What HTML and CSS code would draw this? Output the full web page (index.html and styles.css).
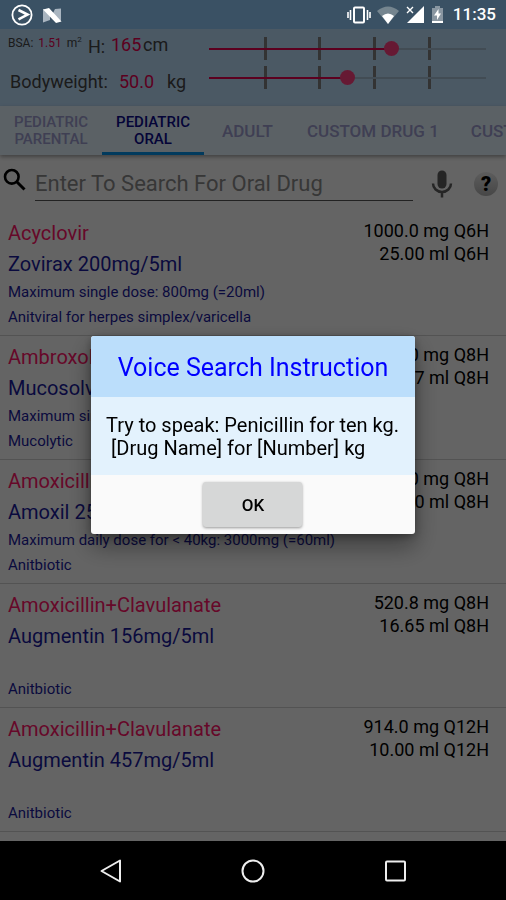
FILE: index.html
```html
<!DOCTYPE html>
<html lang="en">
<head>
<meta charset="utf-8">
<meta name="viewport" content="width=device-width, initial-scale=1">
<title>Drug Dose</title>
<link rel="stylesheet" href="styles.css">
</head>
<body>
<div class="screen">
  <div class="status">
    <svg width="52" height="24" viewBox="0 0 52 24" aria-hidden="true">
      <circle cx="11" cy="12" r="9.600" fill="none" stroke="#fff" stroke-width="1.800"/>
      <path d="M7.500 7 16.500 11.600 7.500 16.400" fill="none" stroke="#fff" stroke-width="2.600"/>
      <path d="M32 6v13.500l7-2.500V11zM50 5.500V18l-9-6 3-6z" fill="#a9b5c0"/>
      <path d="M32 6.500 38 5 50.500 18.500 45 20z" fill="#fff"/>
    </svg>
    <div class="status-right">
      <svg width="24" height="20" viewBox="0 0 24 20" aria-hidden="true"><path d="M1 7v6M3.500 5v10M20.500 5v10M23 7v6" stroke="#fff" stroke-width="1.600"/><rect x="7" y="2.500" width="10" height="15" rx="1" fill="none" stroke="#fff" stroke-width="2"/></svg>
      <svg width="22" height="20" viewBox="0 0 22 20" aria-hidden="true"><path d="M0 6Q11-3 22 6L11 19z" fill="#75858f"/><path d="M5 11Q11 6 17 11L11 19z" fill="#fff"/></svg>
      <svg width="20" height="20" viewBox="0 0 20 20" aria-hidden="true"><path d="M19 1v17H2z" fill="#fff"/><path d="M2 2l6 6M8 2L2 8" stroke="#fff" stroke-width="1.400"/></svg>
      <svg width="14" height="20" viewBox="0 0 14 20" aria-hidden="true"><path d="M1 3h3V1h5v2h3v13H1z" fill="#8996a1"/><path d="M1 16h11v2H1z" fill="#fff"/><path d="M7.500 4 3 10.500h3V15l4-6.500H7.500z" fill="#fff"/></svg>
      <span class="clock">11:35</span>
    </div>
  </div>

  <header class="patient">
    <div class="readings">
      <div class="reading height">
        <span class="bsa"><span>BSA:</span><b>1.51</b><span>m<sup>2</sup></span></span>
        <label class="height-label" for="height">H:</label>
        <output class="value" for="height">165</output>
        <span class="unit">cm</span>
      </div>
      <div class="reading weight">
        <label class="weight-label" for="weight">Bodyweight:</label>
        <output class="value" for="weight">50.0</output>
        <span class="unit">kg</span>
      </div>
    </div>
    <div class="sliders">
      <div class="slider"><input class="tall" id="height" type="range" min="0" max="250" value="165"></div>
      <div class="slider"><input class="heavy" id="weight" type="range" min="0" max="100" value="50"></div>
    </div>
  </header>

  <nav class="tabs">
    <a class="tab two-line" href="#parental">PEDIATRIC<br>PARENTAL</a>
    <a class="tab two-line active" href="#oral" aria-current="page">PEDIATRIC<br>ORAL</a>
    <a class="tab" href="#adult">ADULT</a>
    <a class="tab" href="#custom1">CUSTOM DRUG 1</a>
    <a class="tab" href="#custom2">CUSTOM DRUG 2</a>
  </nav>

  <main>
    <div class="search">
      <svg class="magnifier" width="24" height="24" viewBox="0 0 24 24" aria-hidden="true"><circle cx="8.800" cy="8.800" r="6.800" fill="none" stroke="#000" stroke-width="2.600"/><path d="M13.500 13.500 21.500 21.500" stroke="#000" stroke-width="3"/></svg>
      <input class="query" type="text" aria-label="Search for oral drug" placeholder="Enter To Search For Oral Drug">
      <button class="icon-button mic" type="button" aria-label="Voice search"><svg width="22" height="28" viewBox="0 0 22 28"><rect x="6.500" y="0.500" width="9" height="18" rx="4.500" fill="#5c5c5c"/><path d="M2 13.500a9 8.500 0 0 0 18 0M11 22v5.500" fill="none" stroke="#5c5c5c" stroke-width="2.500"/></svg></button>
      <button class="icon-button help" type="button" aria-label="Help">?</button>
    </div>

    <ul class="drugs">
      <li class="drug">
        <div class="info"><h2>Acyclovir</h2><h3>Zovirax 200mg/5ml</h3><p>Maximum single dose: 800mg (=20ml)</p><p>Anitviral for herpes simplex/varicella</p></div>
        <div class="dose">1000.0 mg Q6H<br>25.00 ml Q6H</div>
      </li>
      <li class="drug">
        <div class="info"><h2>Ambroxol</h2><h3>Mucosolvan</h3><p>Maximum single dose</p><p>Mucolytic</p></div>
        <div class="dose">30.0 mg Q8H<br>4.17 ml Q8H</div>
      </li>
      <li class="drug">
        <div class="info"><h2>Amoxicillin</h2><h3>Amoxil 250mg/5ml</h3><p>Maximum daily dose for &lt; 40kg: 3000mg (=60ml)</p><p>Anitbiotic</p></div>
        <div class="dose">500.0 mg Q8H<br>10.00 ml Q8H</div>
      </li>
      <li class="drug">
        <div class="info"><h2>Amoxicillin+Clavulanate</h2><h3>Augmentin 156mg/5ml</h3><p></p><p>Anitbiotic</p></div>
        <div class="dose">520.8 mg Q8H<br>16.65 ml Q8H</div>
      </li>
      <li class="drug">
        <div class="info"><h2>Amoxicillin+Clavulanate</h2><h3>Augmentin 457mg/5ml</h3><p></p><p>Anitbiotic</p></div>
        <div class="dose">914.0 mg Q12H<br>10.00 ml Q12H</div>
      </li>
    </ul>
  </main>

  <footer class="navbar">
    <button type="button" aria-label="Back"><svg width="24" height="24" viewBox="0 0 24 24"><path d="M21 1.500v21L2.500 12z"/></svg></button>
    <button type="button" aria-label="Home"><svg width="24" height="24" viewBox="0 0 24 24"><circle cx="12" cy="12" r="10.500"/></svg></button>
    <button type="button" aria-label="Recent apps"><svg width="24" height="24" viewBox="0 0 24 24"><rect x="3" y="2.500" width="19" height="19" rx="1"/></svg></button>
  </footer>

  <div class="scrim">
    <section class="dialog" role="dialog" aria-modal="true" aria-labelledby="dialog-title">
      <h1 id="dialog-title">Voice Search Instruction</h1>
      <p class="message">Try to speak: Penicillin for ten kg.
 [Drug Name] for [Number] kg</p>
      <div class="actions"><button class="ok" type="button">OK</button></div>
    </section>
  </div>
</div>
</body>
</html>
```

FILE: styles.css
```css
* { box-sizing: border-box; }
body, h1, h2, h3, p, ul { margin: 0; padding: 0; font-weight: 400; }
button, input { font: inherit; margin: 0; }
button { border: 0; padding: 0; }
svg { display: block; flex: none; }

body {
  background: #646464;
  font-family: Roboto, "Liberation Sans", sans-serif;
  color: #000;
}
.screen {
  display: flex;
  flex-direction: column;
  min-height: 100vh;
  background: #fafafa;
  overflow: hidden;
}

.status {
  position: relative;
  z-index: 3;
  display: flex;
  justify-content: space-between;
  align-items: center;
  height: 29px;
  padding: 0 10px 0 11px;
  background: #3a5164;
  color: #fff;
}
.status-right { display: flex; align-items: center; gap: 6px; }
.clock { padding-left: 2px; font-size: 17px; font-weight: 500; line-height: 29px; }

.patient {
  display: flex;
  justify-content: space-between;
  height: 77px;
  padding: 4px 20px 0 8px;
  background: #bbdefb;
  color: #444;
}
.reading { display: flex; height: 36px; font-size: 18px; line-height: 24px; }
.bsa { display: flex; gap: 5px; width: 80px; font-size: 12px; line-height: 20px; white-space: nowrap; }
.bsa b { font-weight: 400; color: #e5004f; }
.bsa sup { font-size: 8px; line-height: 1; }
.height-label { width: 23px; line-height: 28px; }
.weight { padding-left: 2px; line-height: 26px; }
.weight-label { width: 109px; }
.value { color: #e5004f; }
.height-label + .value { width: 32px; }
.weight-label + .value { width: 48px; }
.sliders { width: 58%; padding-top: 4px; }
.slider {
  height: 23px;
  margin-bottom: 6px;
  background:
    linear-gradient(#7f7f7f, #7f7f7f) 20% 0 / 3px 100% no-repeat,
    linear-gradient(#7f7f7f, #7f7f7f) 40% 0 / 3px 100% no-repeat,
    linear-gradient(#7f7f7f, #7f7f7f) 60% 0 / 3px 100% no-repeat,
    linear-gradient(#7f7f7f, #7f7f7f) 80% 0 / 3px 100% no-repeat;
}
.slider input {
  appearance: none;
  display: block;
  width: calc(100% + 14px);
  height: 23px;
  margin: 0 -7px;
  background: linear-gradient(90deg, transparent 7px, #e5004f 7px, #e5004f var(--stop), #a6bed2 var(--stop), #a6bed2 calc(100% - 7px), transparent calc(100% - 7px)) center / 100% 2px no-repeat;
}
.slider .tall { --stop: 66%; }
.slider .heavy { --stop: 50%; }
.slider input::-webkit-slider-thumb {
  appearance: none;
  width: 15px;
  height: 15px;
  border-radius: 50%;
  background: #ff4081;
}

.tabs {
  position: relative;
  display: flex;
  height: 49px;
  background: #e3f2fd;
  box-shadow: 0 2px 4px rgba(0, 0, 0, .35);
}
.tab {
  display: flex;
  flex: none;
  align-items: center;
  padding: 4px 16px 0;
  border-bottom: 3px solid transparent;
  color: #9e9dd0;
  font-size: 17px;
  font-weight: 500;
  line-height: 17px;
  text-align: center;
  text-decoration: none;
  white-space: nowrap;
}
.two-line { justify-content: center; width: 102px; padding: 4px 0 0; font-size: 15px; }
.tab:nth-child(3) { padding: 4px 18px 0; }
.active { color: #0a0a8c; border-color: #0391e8; }

.search {
  display: flex;
  align-items: center;
  height: 57px;
  padding: 0 8px 0 3px;
}
.magnifier { align-self: flex-start; margin-top: 13px; }
.query {
  flex: 1;
  min-width: 0;
  height: 35px;
  margin: 0 18px 0 8px;
  padding: 0;
  border: 0;
  border-bottom: 1px solid #555;
  background: transparent;
  color: #000;
  font-size: 22px;
}
.query::placeholder { color: #8a8a8a; opacity: 1; }
.icon-button { background: none; color: #000; }
.mic { margin-right: 21px; }
.help {
  width: 24px;
  height: 24px;
  border-radius: 50%;
  background: linear-gradient(#e8e8e8, #b0b0b0);
  font-size: 20px;
  font-weight: 900;
  line-height: 24px;
}

.drugs { list-style: none; }
.drug {
  display: flex;
  justify-content: space-between;
  padding: 5px 17px 5px 8px;
  border-bottom: 1px solid #d0d0d0;
}
.drug h2 { color: #ff1468; font-size: 20px; line-height: 32px; }
.drug h3 { color: #1a1a9c; font-size: 20px; line-height: 31px; }
.drug p { min-height: 25px; color: #1a1a9c; font-size: 15px; line-height: 25px; }
.info, .dose { white-space: nowrap; }
.dose { padding-top: 2px; font-size: 18px; line-height: 23px; text-align: right; }

.navbar {
  position: relative;
  z-index: 3;
  display: flex;
  justify-content: center;
  gap: 118px;
  align-items: center;
  height: 59px;
  margin-top: auto;
  background: #000;
}
.navbar button { background: none; }
.navbar svg { fill: none; stroke: #eee; stroke-width: 2; stroke-linejoin: round; }

.scrim {
  position: fixed;
  z-index: 2;
  inset: 29px 0 59px;
  display: flex;
  align-items: center;
  justify-content: center;
  background: rgba(0, 0, 0, .6);
}
.dialog {
  width: 64%;
  border-radius: 3px;
  overflow: hidden;
  background: #fafafa;
  box-shadow: 0 12px 24px rgba(0, 0, 0, .4), 0 2px 8px rgba(0, 0, 0, .3);
}
.dialog h1 { padding-top: 2px; background: #bbdefb; color: #00f; font-size: 25px; line-height: 59px; text-align: center; }
.message { padding: 17px 15px 15px; background: #e3f2fd; font-size: 20px; line-height: 23px; white-space: pre-wrap; }
.actions { display: flex; justify-content: center; padding: 7px 0; }
.ok {
  width: 99px;
  height: 45px;
  border-radius: 3px;
  background: #d6d7d7;
  box-shadow: 0 1px 3px rgba(0, 0, 0, .4);
  color: #000;
  font-size: 17px;
  font-weight: 500;
}
```
